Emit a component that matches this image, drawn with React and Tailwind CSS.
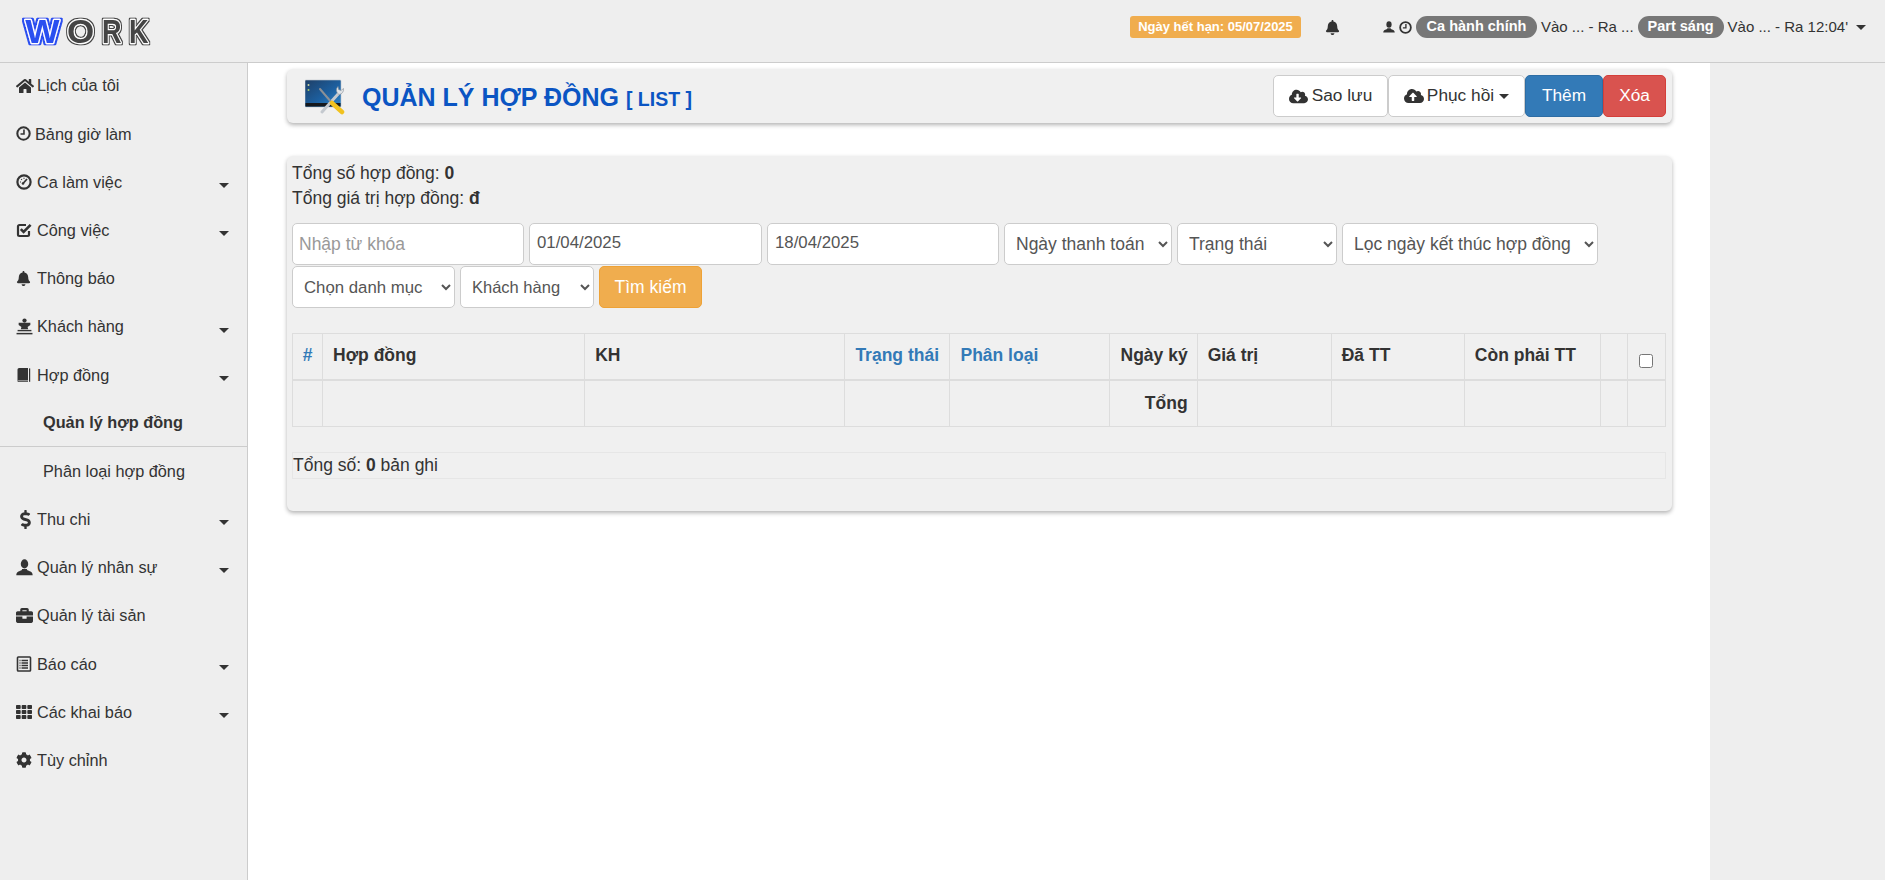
import React from "react";
import {
  FaHome, FaBell, FaDollarSign, FaBriefcase, FaTh, FaCog, FaCloudDownloadAlt, FaCloudUploadAlt,
} from "react-icons/fa";

const Caret = ({ className = "" }) => (
  <span className={`inline-block w-0 h-0 border-x-[5px] border-x-transparent border-t-[5px] border-t-[#333] ${className}`} />
);

const ClockI = ({ size = 15 }) => (
  <svg width={size} height={size} viewBox="0 0 16 16" fill="none" stroke="currentColor">
    <circle cx="8" cy="8" r="6.6" strokeWidth="2.2" />
    <path d="M8.5 3.8v4.7H4.8" strokeWidth="1.7" />
  </svg>
);
const DashI = ({ size = 16 }) => (
  <svg width={size} height={size} viewBox="0 0 16 16" fill="none" stroke="currentColor">
    <circle cx="8" cy="8" r="6.6" strokeWidth="2.2" />
    <path d="M7 9.5 L11 5" strokeWidth="1.7" />
    <path d="M4 8h1M5.2 5.2l.7.7M8 3.8v1" strokeWidth="1.2" />
    <circle cx="7" cy="9.5" r="1.3" fill="currentColor" stroke="none" />
  </svg>
);
const CheckI = ({ size = 16 }) => (
  <svg width={size} height={size} viewBox="0 0 16 16" fill="none" stroke="currentColor">
    <path d="M13 9v3.6a1.4 1.4 0 0 1-1.4 1.4H3.4A1.4 1.4 0 0 1 2 12.6V4.4A1.4 1.4 0 0 1 3.4 3H10" strokeWidth="2.2" />
    <path d="M4.8 7.2 L7.6 10 L14.6 2.8" strokeWidth="2.6" />
  </svg>
);
const KingI = ({ size = 17 }) => (
  <svg width={size} height={size} viewBox="0 0 16 16" fill="currentColor">
    <circle cx="8" cy="2.4" r="2" />
    <path d="M2.5 4.5h11v2.2l-2.6 1.8.6 2H4.5l.6-2-2.6-1.8z" />
    <rect x="1.5" y="11.2" width="13" height="1.3" />
    <rect x="0.5" y="14" width="15" height="1.4" />
  </svg>
);
const BookI = ({ size = 16 }) => (
  <svg width={size} height={size} viewBox="0 0 16 16" fill="currentColor">
    <path d="M1.5 2.6A1.6 1.6 0 0 1 3.1 1H12v12.6H3.1c-.9 0-1.6.4-1.6.9z" />
    <path d="M1.5 14c0 .6.7 1 1.6 1H12v-.7H3.1z" />
    <rect x="13" y="1.4" width="1.2" height="13.4" />
  </svg>
);
const UserI = ({ size = 17 }) => (
  <svg width={size} height={size} viewBox="0 0 16 16" fill="currentColor">
    <ellipse cx="8" cy="4.6" rx="3.5" ry="4.3" />
    <path d="M0.3 15.3c0-2.8 2.2-3.6 4.4-4.4.7-.3 1-.7 1-1.4h4.6c0 .7.3 1.1 1 1.4 2.2.8 4.4 1.6 4.4 4.4z" />
  </svg>
);
const ListI = ({ size = 16 }) => (
  <svg width={size} height={size} viewBox="0 0 16 16" fill="none" stroke="currentColor">
    <rect x="1.5" y="1" width="13" height="14" rx="0.8" strokeWidth="1.6" />
    <path d="M5.5 4.5h6.5M5.5 7h6.5M5.5 9.5h6.5M5.5 12h6.5M3.5 4.5h1M3.5 7h1M3.5 9.5h1M3.5 12h1" strokeWidth="1.3" />
  </svg>
);

const nav = [
  { t: "Lịch của tôi", I: FaHome, s: 18 },
  { t: "Bảng giờ làm", I: ClockI, s: 15, w: 19 },
  { t: "Ca làm việc", I: DashI, s: 16 },
  { t: "Công việc", I: CheckI, s: 16 },
  { t: "Thông báo", I: FaBell, s: 15 },
  { t: "Khách hàng", I: KingI, s: 17 },
  { t: "Hợp đồng", I: BookI, s: 16 },
  { t: "Quản lý hợp đồng", sub: 1, b: 1 },
  { t: "Phân loại hợp đồng", sub: 1 },
  { t: "Thu chi", I: FaDollarSign, s: 19 },
  { t: "Quản lý nhân sự", I: UserI, s: 17 },
  { t: "Quản lý tài sản", I: FaBriefcase, s: 17 },
  { t: "Báo cáo", I: ListI, s: 16 },
  { t: "Các khai báo", I: FaTh, s: 16 },
  { t: "Tùy chỉnh", I: FaCog, s: 16 },
];
const carets = new Set(["Ca làm việc", "Công việc", "Khách hàng", "Hợp đồng", "Thu chi", "Quản lý nhân sự", "Báo cáo", "Các khai báo"]);

const cols = [30, 262, 260, 105, 159, 88, 134, 133, 136, 27, 38];

const Logo = () => {
  const common = { y: 30, fontSize: 33, fontWeight: 700, stroke: "#ffffff", strokeWidth: 2.4, strokeLinejoin: "round", paintOrder: "stroke" };
  return (
    <svg width="132" height="36" viewBox="0 0 132 36" className="block overflow-visible" style={{ fontFamily: '"Liberation Sans", sans-serif' }}>
      <defs>
        <filter id="ringBlue" x="-20%" y="-20%" width="140%" height="140%">
          <feMorphology in="SourceAlpha" operator="dilate" radius="1.4" result="d" />
          <feFlood floodColor="#2b4ff0" />
          <feComposite in2="d" operator="in" />
          <feMerge><feMergeNode /><feMergeNode in="SourceGraphic" /></feMerge>
        </filter>
        <filter id="ringDark" x="-20%" y="-20%" width="140%" height="140%">
          <feMorphology in="SourceAlpha" operator="dilate" radius="1.3" result="d" />
          <feFlood floodColor="#444444" />
          <feComposite in2="d" operator="in" />
          <feMerge><feMergeNode /><feMergeNode in="SourceGraphic" /></feMerge>
        </filter>
      </defs>
      <g transform="translate(3 0) scale(1.1 1)">
        <text x="2" {...common} fill="#2b4ff0" filter="url(#ringBlue)">W</text>
      </g>
      <g transform="translate(47 0) scale(1.06 1)">
        <text x="0" {...common} fill="#444444" filter="url(#ringDark)">O</text>
      </g>
      <g transform="translate(82 0) scale(0.82 1)">
        <text x="0 33" {...common} fill="#444444" filter="url(#ringDark)">RK</text>
      </g>
    </svg>
  );
};

const PageIcon = () => (
  <svg width="40" height="37" viewBox="0 0 40 37" className="block">
    <defs>
      <linearGradient id="scr" x1="0" y1="0" x2="1" y2="1">
        <stop offset="0" stopColor="#1f3f66" />
        <stop offset="0.55" stopColor="#1c5f9f" />
        <stop offset="1" stopColor="#2f86c9" />
      </linearGradient>
    </defs>
    <rect x="0" y="2" width="36" height="27" rx="1" fill="url(#scr)" stroke="#bfc6cf" strokeWidth="0.6" />
    <rect x="0.5" y="25" width="35" height="3.5" fill="#15181c" />
    <circle cx="3.5" cy="7" r="1" fill="#cfd6a0" />
    <circle cx="3.5" cy="12" r="1" fill="#a9c96a" />
    <path d="M34 15 L17 34" stroke="#c4c9cf" strokeWidth="3" strokeLinecap="round" />
    <path d="M33 8.5a5 5 0 0 0 1 8 5 5 0 0 0 4.5-6l-2.5 2-2.5-1z" fill="#dfe3e7" stroke="#8a9097" strokeWidth="0.6" />
    <path d="M15 11 L27 25" stroke="#8b9096" strokeWidth="2" strokeLinecap="round" />
    <path d="M27 25 L37 34" stroke="#f1c21f" strokeWidth="4.5" strokeLinecap="round" />
  </svg>
);

const inputCls = "h-[42px] bg-white border border-[#ccc] rounded-[5px] text-[#555] outline-none placeholder:text-[#999]";
const selectCls = "h-[42px] bg-white border border-[#ccc] rounded-[5px] text-[#555] pl-[7px] outline-none";
const th = "border border-[#ddd] border-b-2 font-bold pb-[3px]";

export default function App() {
  return (
    <div className="h-[880px] bg-[#eeeeee] text-[#333] text-[16.3px] overflow-hidden flex flex-col" style={{ fontFamily: '"Liberation Sans", Arial, sans-serif' }}>
      <header className="h-[63px] shrink-0 flex items-start border-b border-[#ccc]">
        <div className="ml-[20px] mt-[13px]"><Logo /></div>
        <div className="ml-auto mr-[19px] mt-[16px] flex items-center h-[22px]">
          <span className="bg-[#f0ad4e] text-white font-bold text-[13px] h-[22px] w-[171px] rounded-[3px] flex items-center justify-center mr-[24px] whitespace-nowrap">Ngày hết hạn: 05/07/2025</span>
          <FaBell size={15} className="text-[#333] mr-[43px]" />
          <UserI size={12} />
          <span className="w-[4px]" />
          <ClockI size={13} />
          <span className="w-[4px]" />
          <span className="bg-[#777] text-white font-bold text-[14.5px] h-[22px] w-[121px] rounded-[11px] flex items-center justify-center mr-[4px] whitespace-nowrap">Ca hành chính</span>
          <span className="text-[15px] mr-[4px] whitespace-nowrap">Vào ... - Ra ...</span>
          <span className="bg-[#777] text-white font-bold text-[14.5px] h-[22px] w-[86px] rounded-[11px] flex items-center justify-center mr-[4px] whitespace-nowrap">Part sáng</span>
          <span className="text-[15px] whitespace-nowrap">Vào ... - Ra 12:04'</span>
          <Caret className="ml-[8px]" />
        </div>
      </header>
      <div className="flex flex-1 min-h-0">
        <aside className="w-[248px] shrink-0 border-r border-[#ccc]">
          <div className="-mt-[1.5px]">
            {nav.map((n) =>
              n.sub ? (
                <div key={n.t} className={`h-[48.2px] pl-[43px] flex items-center ${n.b ? "font-bold border-b border-[#ccc]" : ""}`}>{n.t}</div>
              ) : (
                <div key={n.t} className="h-[48.2px] pl-[16px] pr-[18px] flex items-center">
                  <span className="shrink-0 flex items-center text-[#333]" style={{ width: n.w || 21 }}><n.I size={n.s} /></span>
                  <span>{n.t}</span>
                  {carets.has(n.t) ? <Caret className="ml-auto mt-[7px]" /> : null}
                </div>
              )
            )}
          </div>
        </aside>
        <main className="w-[1462px] shrink-0 bg-white pl-[39px] pr-[38px] pt-[6px]">
          <section className="h-[54px] bg-[#f0f0f0] rounded-[6px] shadow-[0_2px_4px_rgba(0,0,0,0.3)] flex items-center pl-[18px] pr-[6px]">
            <PageIcon />
            <h1 className="ml-[17px] mt-[3px] font-bold text-[25px] text-[#0b55c3] whitespace-nowrap leading-none">QUẢN LÝ HỢP ĐỒNG <span className="text-[19.5px]">[ LIST ]</span></h1>
            <div className="ml-auto flex items-center h-[42px] text-[17.3px]">
              <button className="w-[115px] h-[42px] bg-white border border-[#ccc] rounded-[5px] flex items-center justify-center gap-[4px] text-[#333]"><FaCloudDownloadAlt size={19} />Sao lưu</button>
              <button className="w-[137px] h-[42px] bg-white border border-[#ccc] rounded-[5px] flex items-center justify-center gap-[3px] text-[#333]"><FaCloudUploadAlt size={20} />Phục hồi<Caret className="ml-[2px]" /></button>
              <button className="w-[78px] h-[42px] bg-[#337ab7] border border-[#2e6da4] rounded-[5px] text-white">Thêm</button>
              <button className="w-[63px] h-[42px] bg-[#d9534f] border border-[#d43f3a] rounded-[5px] text-white">Xóa</button>
            </div>
          </section>
          <section className="mt-[33px] h-[355px] bg-[#f0f0f0] rounded-[6px] shadow-[0_2px_4px_rgba(0,0,0,0.3)] pl-[5px] pr-[6px] pt-[5px] text-[17.5px]">
            <div className="leading-[25px]">Tổng số hợp đồng: <b>0</b></div>
            <div className="leading-[25px]">Tổng giá trị hợp đồng: <b>đ</b></div>
            <div className="mt-[12px] flex flex-wrap gap-x-[5px] gap-y-[1px] items-center w-[1340px]">
              <input className={`${inputCls} w-[232px] text-[17.5px] px-[6px]`} placeholder="Nhập từ khóa" />
              <input className={`${inputCls} w-[233px] text-[16.8px] px-[7px] pb-[2px]`} defaultValue="01/04/2025" />
              <input className={`${inputCls} w-[232px] text-[16.8px] px-[7px] pb-[2px]`} defaultValue="18/04/2025" />
              <select className={`${selectCls} w-[168px] text-[17.5px]`}><option>Ngày thanh toán</option></select>
              <select className={`${selectCls} w-[160px] text-[17.5px]`}><option>Trạng thái</option></select>
              <select className={`${selectCls} w-[256px] text-[17.5px]`}><option>Lọc ngày kết thúc hợp đồng</option></select>
              <select className={`${selectCls} w-[163px] text-[16.8px]`}><option>Chọn danh mục</option></select>
              <select className={`${selectCls} w-[134px] text-[16.5px]`}><option>Khách hàng</option></select>
              <button className="w-[103px] h-[42px] bg-[#f0ad4e] border border-[#eea236] rounded-[5px] text-white">Tìm kiếm</button>
            </div>
            <table className="mt-[25px] table-fixed border-collapse w-[1374px]">
              <colgroup>{cols.map((w, i) => <col key={i} style={{ width: w }} />)}</colgroup>
              <thead>
                <tr className="h-[46px]">
                  <th className={`${th} text-center text-[#337ab7]`}>#</th>
                  <th className={`${th} text-left pl-[10px]`}>Hợp đồng</th>
                  <th className={`${th} text-left pl-[10px]`}>KH</th>
                  <th className={`${th} text-left pl-[10px] text-[#337ab7] whitespace-nowrap`}>Trạng thái</th>
                  <th className={`${th} text-left pl-[10px] text-[#337ab7]`}>Phân loại</th>
                  <th className={`${th} text-right pr-[9px] whitespace-nowrap`}>Ngày ký</th>
                  <th className={`${th} text-left pl-[10px]`}>Giá trị</th>
                  <th className={`${th} text-left pl-[10px]`}>Đã TT</th>
                  <th className={`${th} text-left pl-[10px] whitespace-nowrap`}>Còn phải TT</th>
                  <th className={th}></th>
                  <th className={`${th} text-center`}><input type="checkbox" className="w-[14px] h-[14px] align-middle mt-[9px]" /></th>
                </tr>
              </thead>
              <tbody>
                <tr className="h-[47px]">
                  {cols.map((_, i) => (
                    <td key={i} className={`border border-[#ddd] ${i === 5 ? "text-right pr-[9px] font-bold pb-[1px]" : ""}`}>{i === 5 ? "Tổng" : null}</td>
                  ))}
                </tr>
              </tbody>
            </table>
            <div className="mt-[25px] w-[1374px] h-[27px] border border-[#e6e6e6] flex items-center">
              <span>Tổng số: <b>0</b> bản ghi</span>
            </div>
          </section>
        </main>
        <div className="flex-1" />
      </div>
    </div>
  );
}
